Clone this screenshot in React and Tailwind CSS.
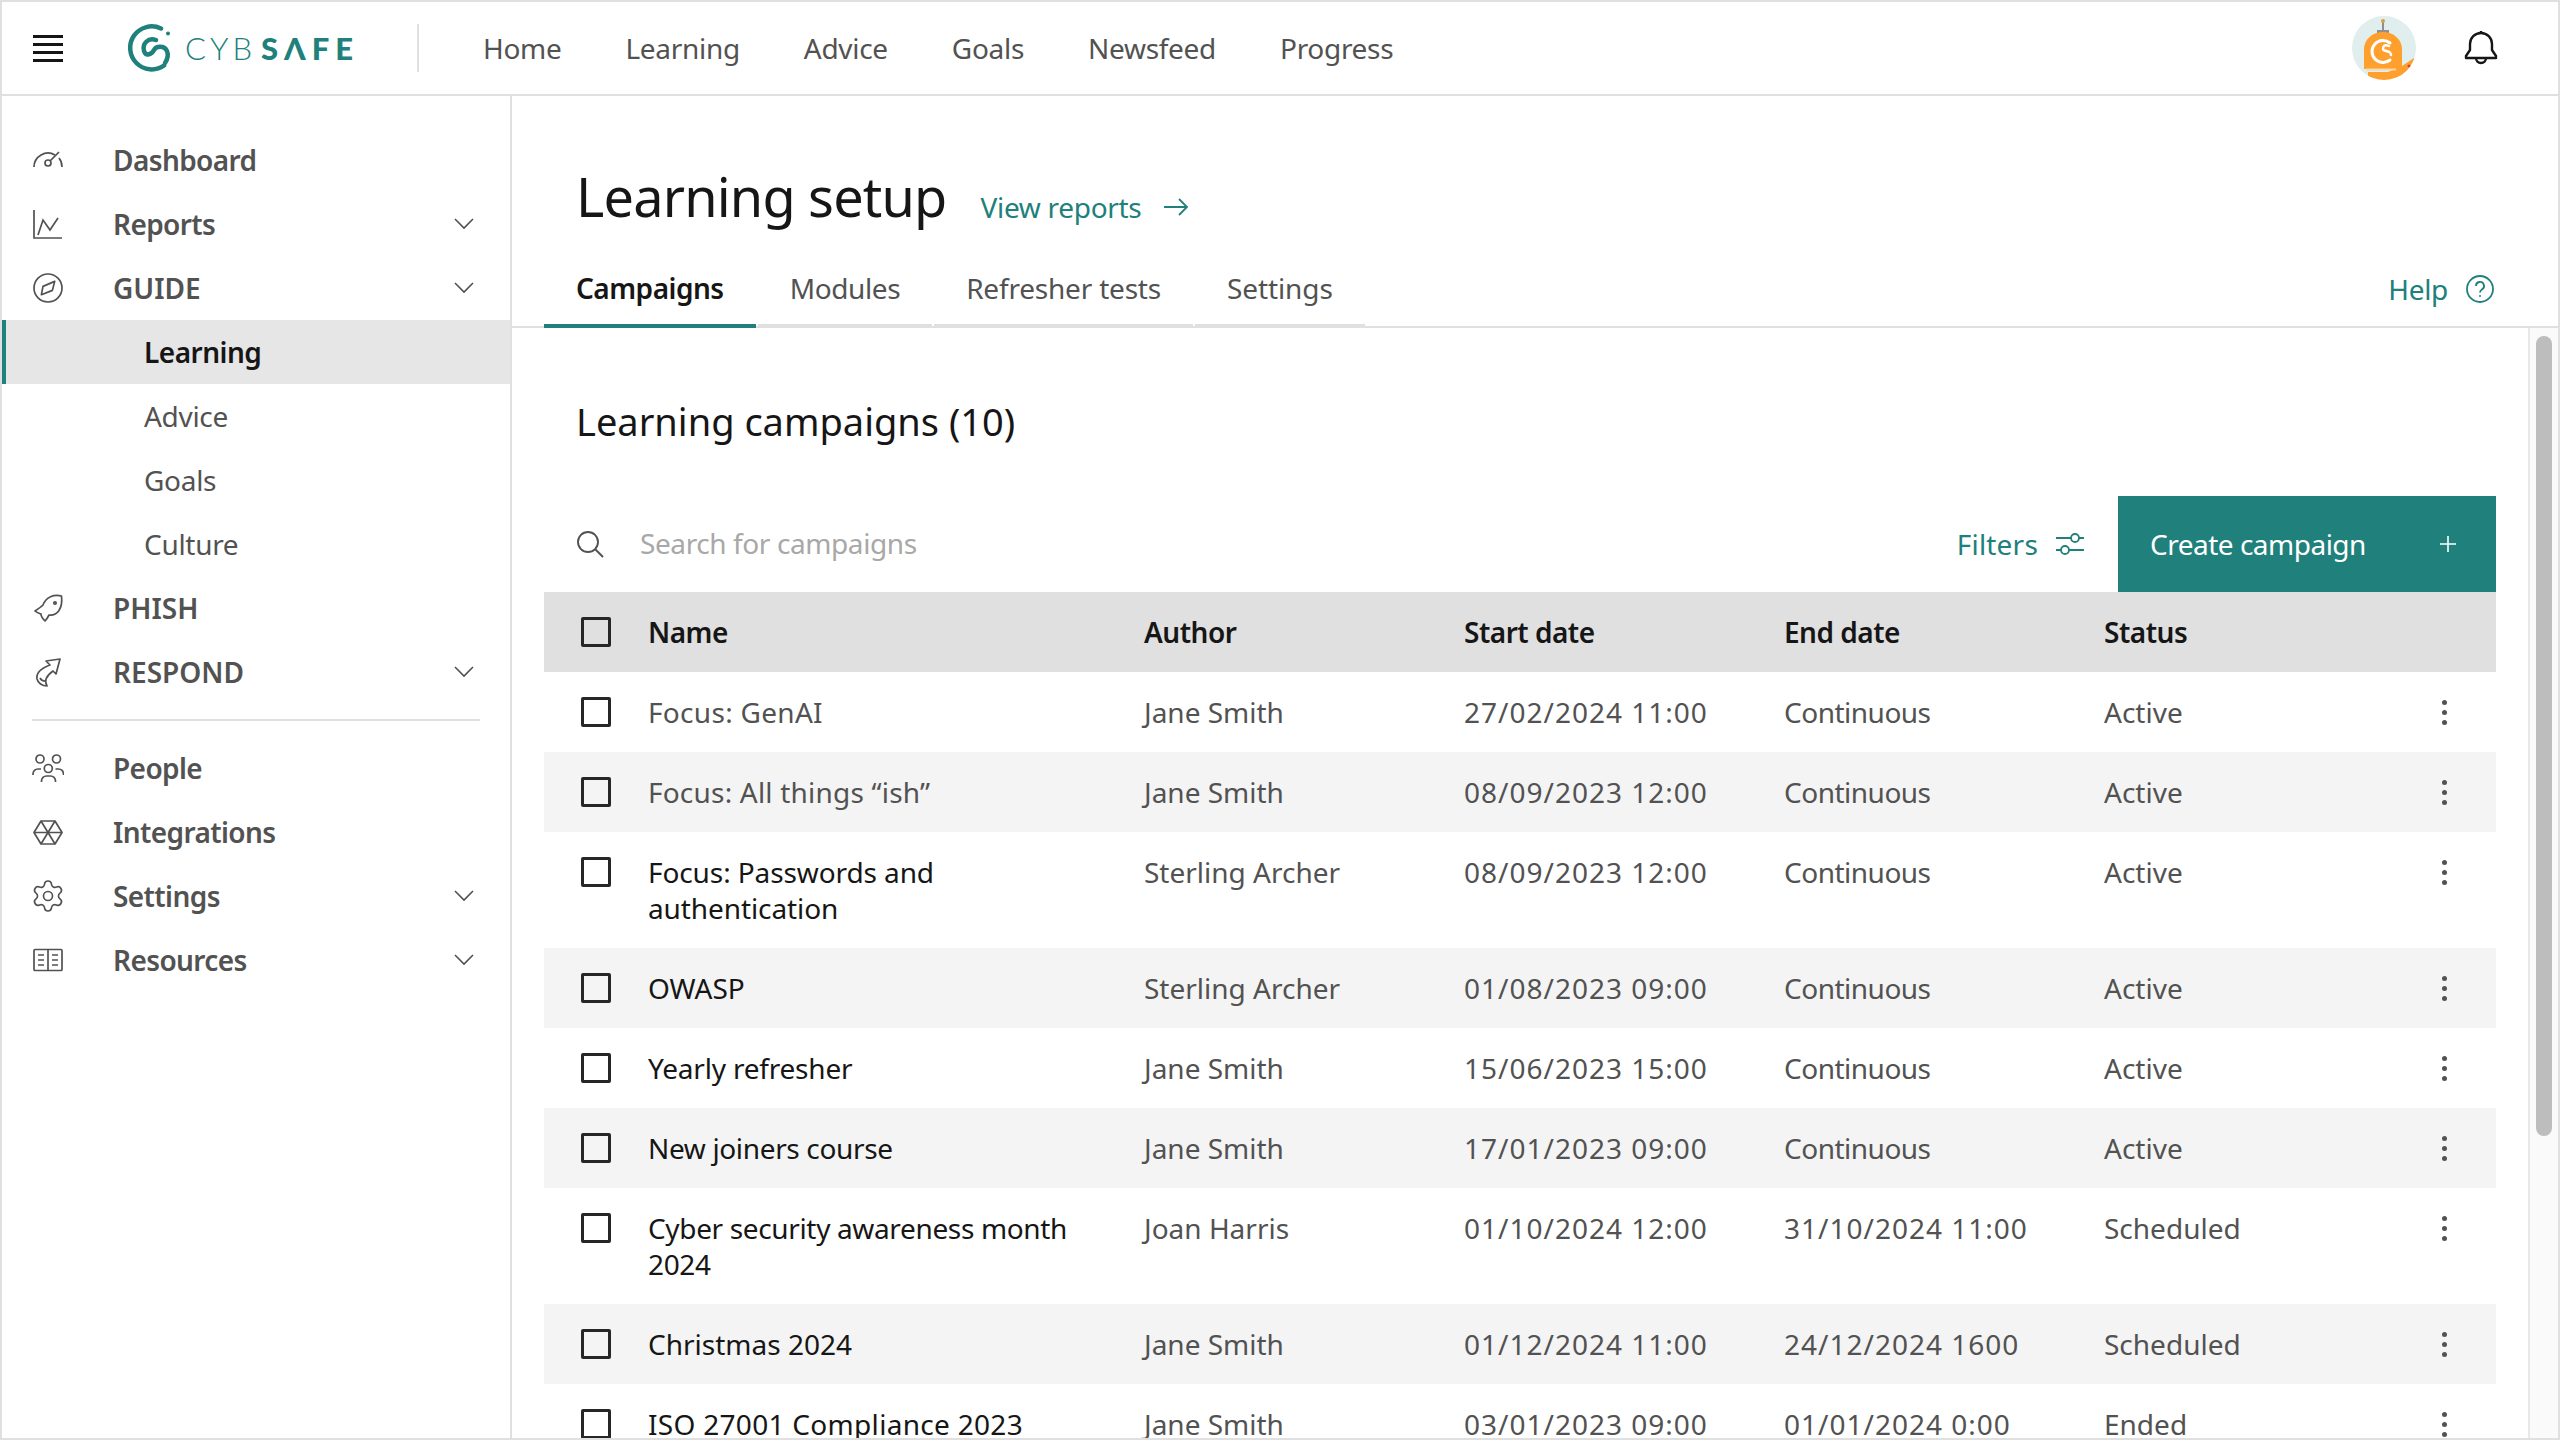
import { Settings } from "lucide-react";

const teal = "#20807c";

const rows = [
	{ name: "Focus: GenAI", dim: true, track: "tracking-[0.3px]", author: "Jane Smith", start: "27/02/2024 11:00", end: "Continuous", status: "Active" },
	{ name: "Focus: All things “ish”", dim: true, track: "tracking-[0.2px]", author: "Jane Smith", start: "08/09/2023 12:00", end: "Continuous", status: "Active" },
	{ name: "Focus: Passwords and authentication", track: "tracking-[-0.1px]", author: "Sterling Archer", start: "08/09/2023 12:00", end: "Continuous", status: "Active" },
	{ name: "OWASP", track: "tracking-[0px]", author: "Sterling Archer", start: "01/08/2023 09:00", end: "Continuous", status: "Active" },
	{ name: "Yearly refresher", track: "tracking-[-0.2px]", author: "Jane Smith", start: "15/06/2023 15:00", end: "Continuous", status: "Active" },
	{ name: "New joiners course", author: "Jane Smith", start: "17/01/2023 09:00", end: "Continuous", status: "Active" },
	{ name: "Cyber security awareness month 2024", author: "Joan Harris", start: "01/10/2024 12:00", end: "31/10/2024 11:00", status: "Scheduled" },
	{ name: "Christmas 2024", track: "tracking-[0px]", author: "Jane Smith", start: "01/12/2024 11:00", end: "24/12/2024 1600", status: "Scheduled" },
	{ name: "ISO 27001 Compliance 2023", track: "tracking-[0.3px]", author: "Jane Smith", start: "03/01/2023 09:00", end: "01/01/2024 0:00", status: "Ended" },
];

// dates run wider than the fallback font's digits, words a bit narrower
const dateCls = (v) => (/\d/.test(v) ? "tracking-[1px]" : "tracking-[-0.5px]");

function Icon({ children }) {
	return (
		<svg viewBox="0 0 32 32" fill="none" stroke="currentColor" strokeWidth="1.7" className="w-8 h-8 shrink-0">
			{children}
		</svg>
	);
}

const GaugeIcon = () => (
	<Icon>
		<path d="M2 23a14 14 0 0 1 21-12" />
		<path d="M27 14a14 14 0 0 1 3 9" />
		<circle cx="16" cy="19" r="3" />
		<path d="M18 17l9-9" />
	</Icon>
);
const ChartIcon = () => (
	<Icon>
		<path d="M2 2v28h28" />
		<path d="M6 27l5-15 7 10 8-12" />
	</Icon>
);
const CompassIcon = () => (
	<Icon>
		<circle cx="16" cy="16" r="14" />
		<path d="M22.7 9.4L11 14.4 9.4 22.7 20.4 18.4z" strokeLinejoin="round" />
	</Icon>
);
const FishIcon = () => (
	<Icon>
		<path d="M29.500 4C22 2 14 5 11 13c-2 2-5 4-8 6 2 2 4 2 6 3 0 3 2 5 4 7 2-2 3-4 4-6 8 1 14-6 12.500-19z" strokeLinejoin="round" />
		<circle cx="23" cy="11" r="1.200" />
	</Icon>
);
const RespondIcon = () => (
	<Icon>
		<path d="M28 3L14 5l4 4C10 12 4 17 5 23c1 4 5 7 10 7-3-5-1-10 6-15l3 3z" strokeLinejoin="round" />
		<path d="M8 22c1 2 3 3 5 3" />
	</Icon>
);
const PeopleIcon = () => (
	<Icon>
		<circle cx="8" cy="7" r="4" />
		<circle cx="24.500" cy="7" r="4" />
		<circle cx="16.300" cy="16.500" r="4" />
		<path d="M1 23v-1a5 5 0 0 1 5-5h3" />
		<path d="M31.500 23v-1a5 5 0 0 0-5-5h-3" />
		<path d="M9.500 30v-1a5 5 0 0 1 5-5h4a5 5 0 0 1 5 5v1" />
	</Icon>
);
const HexIcon = () => (
	<Icon>
		<path d="M9 5h14l7 11.500L23 28H9L2 16.500z" strokeLinejoin="round" />
		<path d="M2 16.500h28M9 5l14 23M23 5L9 28" />
	</Icon>
);
const BookIcon = () => (
	<Icon>
		<rect x="2" y="5.500" width="28" height="21" rx="1" />
		<path d="M16 5.500v21M6 11h6M6 16h6M6 21h6M20 11h6M20 16h6M20 21h6" />
	</Icon>
);

function Chevron() {
	return (
		<svg viewBox="0 0 20 12" className="w-5 h-3 shrink-0" fill="none" stroke="currentColor" strokeWidth="1.6">
			<path d="M1 1l9 9 9-9" />
		</svg>
	);
}

function SideItem({ icon, label, chevron, caps }) {
	return (
		<div className="h-16 flex items-center pl-[30px] pr-[36px] text-[#525252] font-semibold">
			<span className="w-8 flex justify-center">{icon}</span>
			<span className={`ml-[49px] flex-1 ${caps ? "tracking-[0px]" : "tracking-[-0.6px]"}`}>{label}</span>
			{chevron && <Chevron />}
		</div>
	);
}

function SubItem({ label, active }) {
	return (
		<div
			className={
				active
					? "h-16 flex items-center pl-[138px] bg-[#e6e6e6] border-l-4 border-[#20807c] text-[#161616] font-semibold tracking-[-0.5px]"
					: "h-16 flex items-center pl-[142px] text-[#525252]"
			}
		>
			{label}
		</div>
	);
}

function Checkbox() {
	return <div className="w-[30px] h-[30px] border-[3px] border-[#262626] rounded-[2px] shrink-0" />;
}

function Kebab() {
	return (
		<div className="flex flex-col gap-[5px] items-center">
			<span className="w-[5px] h-[5px] rounded-full bg-[#525252]" />
			<span className="w-[5px] h-[5px] rounded-full bg-[#525252]" />
			<span className="w-[5px] h-[5px] rounded-full bg-[#525252]" />
		</div>
	);
}

function Logo() {
	return (
		<div className="w-[226px] flex items-center text-[#20807c]">
			<svg viewBox="0 0 46 48" className="w-[46px] h-[48px] shrink-0" fill="none" stroke="#20807c" strokeLinecap="round">
				<path d="M33 4.500A21.500 21.500 0 1 0 36 41.500" strokeWidth="4.500" />
				<path d="M28 16C20 13 14 20 16 27C18 33 24 30 26 26C28 22 36 21 39 27C41 32 39 36 37 39" strokeWidth="4.500" />
				<circle cx="40" cy="9.500" r="2" fill="#20807c" stroke="none" />
			</svg>
			<span className="ml-[11px] text-[31px] font-light tracking-[4px] font-['Lato',sans-serif] leading-none">CYB</span>
			<span className="ml-[5px] text-[31px] font-black tracking-[6px] font-['Lato',sans-serif] leading-none">SΛFE</span>
		</div>
	);
}

function Avatar() {
	return (
		<svg viewBox="0 0 64 64" className="w-16 h-16">
			<clipPath id="av">
				<circle cx="32" cy="32" r="32" />
			</clipPath>
			<g clipPath="url(#av)">
				<rect width="64" height="64" fill="#e0efee" />
				<path d="M31 5v10" stroke="#8f8f8f" strokeWidth="2" />
				<circle cx="31" cy="5" r="2" fill="#e39a3a" />
				<rect x="25" y="14" width="12" height="3" fill="#8f8f8f" />
				<path d="M12 53V33a19 17 0 0 1 38 0v20z" fill="#ffa02e" />
				<path d="M16 56h20l14-6 12-8v22H16z" fill="#ffa02e" />
				<path d="M14 53.500h30" stroke="#f5d9a8" strokeWidth="2" />
				<path d="M38 27a11 11 0 1 0 0 17" stroke="#fff" strokeWidth="3" fill="none" strokeLinecap="round" />
				<path d="M37 30c-4-2-6 0-6 3s8 1 8 6" stroke="#fff" strokeWidth="2.500" fill="none" strokeLinecap="round" />
				<circle cx="57" cy="50" r="1.500" fill="#d6423a" />
			</g>
		</svg>
	);
}

export default function App() {
	return (
		<div className="h-screen flex flex-col overflow-hidden bg-white border-2 border-[#e0e0e0] text-[28px] leading-[36px] tracking-[-0.3px] font-['Noto_Sans',sans-serif]">
			<header className="h-[94px] shrink-0 flex items-center border-b-2 border-[#e0e0e0]">
				<div className="ml-[31px] w-[30px] flex flex-col gap-[5px]">
					<span className="h-[3px] bg-[#161616]" />
					<span className="h-[3px] bg-[#161616]" />
					<span className="h-[3px] bg-[#161616]" />
					<span className="h-[3px] bg-[#161616]" />
				</div>
				<div className="ml-[65px]">
					<Logo />
				</div>
				<div className="ml-[63px] w-[2px] h-12 bg-[#e0e0e0]" />
				<nav className="ml-[64px] flex gap-[64px] text-[#525252] -mt-[1px]">
					<span>Home</span>
					<span>Learning</span>
					<span>Advice</span>
					<span>Goals</span>
					<span>Newsfeed</span>
					<span>Progress</span>
				</nav>
				<div className="ml-auto flex items-center mr-[60px] gap-[48px]">
					<Avatar />
					<svg viewBox="0 0 34 36" className="w-[34px] h-9" fill="none" stroke="#161616" strokeWidth="2.400" strokeLinejoin="round">
						<path d="M17 3a11 11 0 0 0-11 11v6l-4 6v2h30v-2l-4-6v-6A11 11 0 0 0 17 3z" />
						<path d="M12 28a5 5 0 0 0 10 0" />
						<path d="M17 1v2" />
					</svg>
				</div>
			</header>

			<div className="flex-1 flex min-h-0">
				<aside className="w-[510px] shrink-0 border-r-2 border-[#e0e0e0] pt-[32px]">
					<SideItem icon={<GaugeIcon />} label="Dashboard" />
					<SideItem icon={<ChartIcon />} label="Reports" chevron />
					<SideItem icon={<CompassIcon />} label="GUIDE" chevron caps />
					<SubItem label="Learning" active />
					<SubItem label="Advice" />
					<SubItem label="Goals" />
					<SubItem label="Culture" />
					<SideItem icon={<FishIcon />} label="PHISH" caps />
					<SideItem icon={<RespondIcon />} label="RESPOND" chevron caps />
					<div className="mx-[30px] my-[15px] h-[2px] bg-[#e0e0e0]" />
					<SideItem icon={<PeopleIcon />} label="People" />
					<SideItem icon={<HexIcon />} label="Integrations" />
					<SideItem icon={<Settings className="w-9 h-9 shrink-0" strokeWidth={1.100} />} label="Settings" chevron />
					<SideItem icon={<BookIcon />} label="Resources" chevron />
				</aside>

				<main className="flex-1 flex flex-col min-w-0">
					<div className="h-[160px] shrink-0 px-[32px] flex flex-col">
						<div className="pl-[32px] h-[70px] mt-[65px] flex items-baseline">
							<h1 className="text-[54px] leading-[70px] tracking-[-0.8px] text-[#161616]">Learning setup</h1>
							<a className="ml-[34px] text-[#20807c] flex items-center gap-[22px] translate-y-[1px]">
								View reports
								<svg viewBox="0 0 26 20" className="w-[26px] h-5" fill="none" stroke={teal} strokeWidth="1.800">
									<path d="M1 10h23M16 2l8 8-8 8" />
								</svg>
							</a>
						</div>
					</div>

					<div className="h-[72px] shrink-0 flex items-stretch border-b-2 border-[#e0e0e0] pl-[32px] pr-[64px]">
						<div className="px-[32px] pb-[4px] flex items-center text-[#161616] font-semibold tracking-[-0.5px] border-b-4 border-[#20807c] -mb-[2px]">Campaigns</div>
						<div className="ml-[2px] px-[32px] pb-[4px] flex items-center text-[#525252] tracking-[-0.4px] border-b-4 border-[#e0e0e0] -mb-[2px]">Modules</div>
						<div className="ml-[2px] px-[32px] pb-[4px] flex items-center text-[#525252] tracking-[-0.2px] border-b-4 border-[#e0e0e0] -mb-[2px]">Refresher tests</div>
						<div className="ml-[2px] px-[32px] pb-[4px] flex items-center text-[#525252] tracking-[-0.1px] border-b-4 border-[#e0e0e0] -mb-[2px]">Settings</div>
						<div className="ml-auto flex items-center gap-[18px] text-[#20807c] pb-[4px]">
							Help
							<svg viewBox="0 0 28 28" className="w-7 h-7" fill="none" stroke={teal} strokeWidth="1.800">
								<circle cx="14" cy="14" r="13" />
								<path d="M10 11a4 4 0 1 1 6 3.400c-1.300.800-2 1.500-2 3" />
								<circle cx="14" cy="21" r="1" fill={teal} stroke="none" />
							</svg>
						</div>
					</div>

					<div className="flex-1 min-h-0 flex">
						<div className="flex-1 min-w-0 overflow-hidden pl-[32px] pr-[32px]">
							<h2 className="pl-[32px] mt-[67px] text-[38px] leading-[52px] tracking-[0px] text-[#161616]">Learning campaigns (10)</h2>
							<div className="mt-[49px] h-24 flex items-center">
								<svg viewBox="0 0 28 28" className="ml-[32px] w-7 h-7 shrink-0" fill="none" stroke="#525252" strokeWidth="1.900">
									<circle cx="12" cy="12" r="10" />
									<path d="M19 19l8 8" />
								</svg>
								<span className="ml-[36px] text-[#a8a8a8] tracking-[-0.4px] -translate-y-[1px]">Search for campaigns</span>
								<a className="ml-auto flex items-center gap-[18px] text-[#20807c] tracking-[0.2px]">
									Filters
									<svg viewBox="0 0 28 24" className="w-7 h-6" fill="none" stroke={teal} strokeWidth="1.800">
										<path d="M0 6h15M23 6h5M0 18h5M13 18h15" />
										<circle cx="19" cy="6" r="4" />
										<circle cx="9" cy="18" r="4" />
									</svg>
								</a>
								<div className="ml-[34px] w-[378px] h-24 bg-[#20807c] text-white flex items-center justify-between pl-[32px] pr-[40px] tracking-[-0.5px]">
									Create campaign
									<svg viewBox="0 0 16 16" className="w-4 h-4" fill="none" stroke="#fff" strokeWidth="1.600">
										<path d="M8 0v16M0 8h16" />
									</svg>
								</div>
							</div>

							<div className="h-20 bg-[#e0e0e0] flex items-center font-semibold tracking-[-0.5px] text-[#161616]">
								<div className="w-[104px] pl-[37px]">
									<Checkbox />
								</div>
								<div className="w-[496px]">Name</div>
								<div className="w-[320px]">Author</div>
								<div className="w-[320px]">Start date</div>
								<div className="w-[320px]">End date</div>
								<div className="w-[320px]">Status</div>
							</div>

							{rows.map((row, i) => (
								<div key={row.name} className={`flex py-[22px] ${i % 2 === 1 ? "bg-[#f4f4f4]" : "bg-white"} text-[#525252]`}>
									<div className="w-[104px] pl-[37px] pt-[3px]">
										<Checkbox />
									</div>
									<div className={`w-[496px] pr-[50px] ${row.dim ? "" : "text-[#161616]"} ${row.track || "tracking-[-0.35px]"}`}>{row.name}</div>
									<div className="w-[320px] tracking-[0px]">{row.author}</div>
									<div className={`w-[320px] ${dateCls(row.start)}`}>{row.start}</div>
									<div className={`w-[320px] ${dateCls(row.end)}`}>{row.end}</div>
									<div className="w-[320px] tracking-[0px]">{row.status}</div>
									<div className="w-[40px] pt-[6px]">
										<Kebab />
									</div>
								</div>
							))}
						</div>

						<div className="w-[30px] shrink-0 border-l-2 border-[#e8e8e8] bg-[#fafafa] px-[6px] pt-[8px]">
							<div className="h-[800px] rounded-full bg-[#bdbdbd]" />
						</div>
					</div>
				</main>
			</div>
		</div>
	);
}
